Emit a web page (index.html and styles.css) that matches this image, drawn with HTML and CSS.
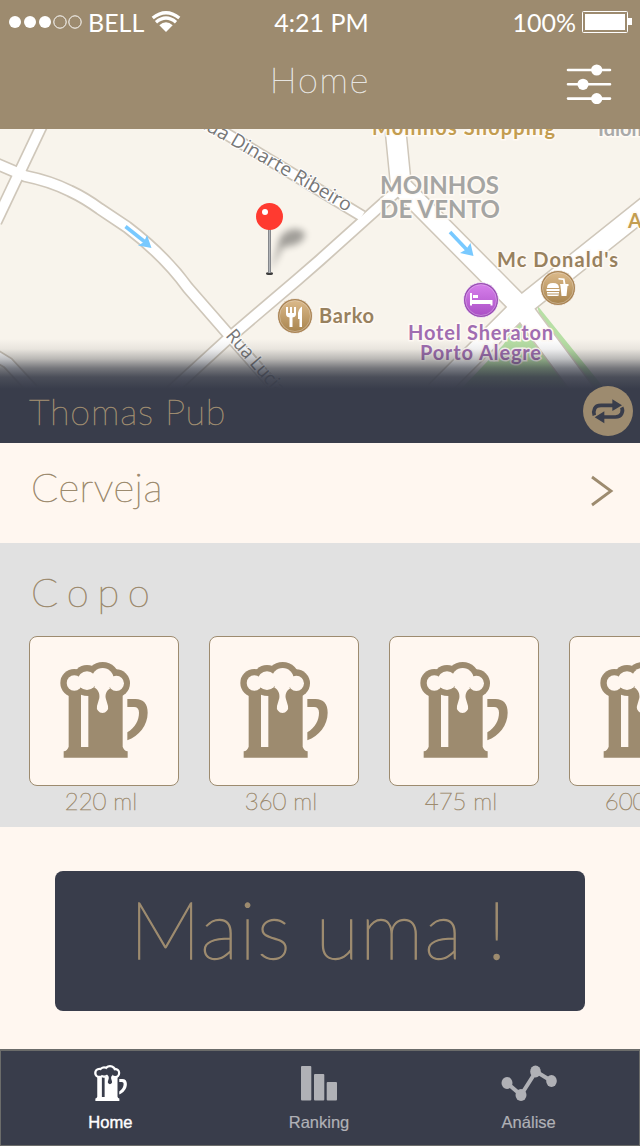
FILE: index.html
```html
<!DOCTYPE html>
<html lang="pt-BR">
<head>
<meta charset="utf-8">
<title>Home</title>
<link rel="stylesheet" href="styles.css">
</head>
<body>
<svg class="defs" aria-hidden="true">
  <symbol id="mug" viewBox="121 96 262 288">
    <g fill="currentColor">
      <circle cx="163" cy="159" r="42"/><circle cx="201" cy="148" r="43"/><circle cx="248" cy="147" r="51"/><circle cx="288" cy="160" r="42"/>
      <path d="M146 185H308V350Q312 362 323 364V383H131V364Q142 362 146 350Z"/>
      <path d="M322 207H346C371 207 383 222 383 248C383 286 357 318 322 331V307C346 292 357 270 357 248C357 237 352 231 342 231H322Z"/>
    </g>
    <g class="mug-foam">
      <circle cx="163" cy="159" r="23"/><circle cx="201" cy="152" r="28"/><circle cx="248" cy="147" r="33"/><circle cx="289" cy="160" r="23"/>
      <path d="M221 170C234 179 240 189 238 204L231 228A17 17 0 1 0 264 228L257 204C255 190 261 180 273 173Z"/>
      <path d="M183 194Q193 198 205 198V351H183Z"/>
    </g>
  </symbol>
</svg>
<div class="screen">
  <header class="header">
    <div class="status">
      <div class="status-left">
        <svg width="73" height="14" viewBox="0 0 73 14"><g fill="#fff"><circle cx="6" cy="7" r="6"/><circle cx="21" cy="7" r="6"/><circle cx="36" cy="7" r="6"/></g><g fill="none" stroke="#fff"><circle cx="51" cy="7" r="6.2"/><circle cx="66" cy="7" r="6.2"/></g></svg>
        <span class="carrier">BELL</span>
        <svg width="30" height="22" viewBox="0 0 30 22"><path fill="#fff" d="M15 21L8.3 14.2Q15 8.5 21.7 14.2Z"/><g fill="none" stroke="#fff" stroke-width="3.400"><path d="M5 11.2Q15 2.8 25 11.2"/><path d="M1.700 7Q15-3.400 28.300 7"/></g></svg>
      </div>
      <span class="clock">4:21 PM</span>
      <div class="status-right">
        <span class="percent">100%</span>
        <svg width="50" height="22" viewBox="0 0 50 22"><rect x=".5" y=".5" width="45" height="21" rx="1" fill="none" stroke="#fff"/><path fill="#fff" d="M3 3H43V19H3ZM46 7H50V14H46Z"/></svg>
      </div>
    </div>
    <div class="nav">
      <h1 class="nav-title">Home</h1>
      <svg class="sliders" width="46" height="40" viewBox="0 0 46 40"><path d="M2 6H44M2 20.300H44M2 34.600H44" stroke="#fff" stroke-width="2.600" stroke-linecap="round"/><g fill="#fff"><circle cx="30.700" cy="6" r="5.600"/><circle cx="17" cy="20.300" r="5.600"/><circle cx="30.700" cy="34.600" r="5.600"/></g></svg>
    </div>
  </header>

  <section class="map">
    <svg class="map-canvas" width="640" height="314" viewBox="0 129 640 314">
      <defs>
        <linearGradient id="tan" x2="0" y2="1"><stop stop-color="#dbb98a"/><stop offset="1" stop-color="#a9854f"/></linearGradient>
        <linearGradient id="violet" x2="0" y2="1"><stop stop-color="#d67feb"/><stop offset="1" stop-color="#ab50c6"/></linearGradient>
        <filter id="soft" x="-50%" y="-50%" width="200%" height="200%"><feGaussianBlur stdDeviation="3.500"/></filter>
        <g id="roads-narrow" fill="none">
          <path d="M42 125L-4 222"/>
          <path d="M-3 164L25 176Q50 181 70 191Q85 198 100 209L127 227Q165 256 188 288L229 335L280 393"/>
          <path d="M-5 355L8 363L33 390"/>
          <path d="M205 121L362 216"/>
          <path d="M170 392L230 337L297 280L320 260L398 190"/>
        </g>
        <g id="roads-wide" fill="none" stroke-linejoin="round">
          <path d="M396 120V135L401 186L521 307L585 393"/>
          <path d="M650 204L521 307L436 392"/>
        </g>
      </defs>
      <path fill="#b7dfa5" d="M521 320L503 345L462 388H568L540 350ZM537 305L541 322L594 388H604L562 336Z"/>
      <use href="#roads-narrow" stroke="#cfc7ba" stroke-width="13"/>
      <use href="#roads-wide" stroke="#cfc7ba" stroke-width="22.500"/>
      <use href="#roads-narrow" stroke="#fff" stroke-width="9.600"/>
      <use href="#roads-wide" stroke="#fff" stroke-width="19.500"/>
      <g fill="none" stroke="#78c9ff" stroke-width="3.600"><path d="M125.500 226.500L145 242"/><path d="M450 232L468 251"/></g>
      <g fill="#78c9ff"><path d="M147 235L151.500 248L138 245.500L144 242Z"/><path d="M470.500 243L473.500 256L460 253L466 249.500Z"/></g>
      <g class="street-label">
        <text transform="translate(195 124) rotate(30)" textLength="176" lengthAdjust="spacingAndGlyphs">Rua Dinarte Ribeiro</text>
        <text transform="translate(225 336) rotate(49)" textLength="80" lengthAdjust="spacingAndGlyphs">Rua Lucia</text>
      </g>
      <g class="place-label">
        <text class="gold" x="372" y="135" textLength="183">Moinhos Shopping</text>
        <text class="grey" x="598" y="136">Idiomas</text>
        <text class="gold" x="628" y="228">A</text>
        <text class="district" x="380" y="194" textLength="119">MOINHOS</text>
        <text class="district" x="380" y="218" textLength="120">DE VENTO</text>
        <text class="brown" x="497" y="267" textLength="121">Mc Donald's</text>
        <text class="brown" x="319" y="323" textLength="55">Barko</text>
      </g>
      <g stroke="#fff" stroke-opacity=".7" stroke-width="1">
        <circle cx="295" cy="316" r="17.500" fill="#aa8454"/><circle cx="295" cy="316" r="15.500" fill="url(#tan)" stroke-opacity=".3"/>
        <circle cx="558" cy="288" r="17.500" fill="#aa8454"/><circle cx="558" cy="288" r="15.500" fill="url(#tan)" stroke-opacity=".3"/>
        <circle cx="481" cy="300" r="17.500" fill="#9a4bb4"/><circle cx="481" cy="300" r="15.500" fill="url(#violet)" stroke-opacity=".3"/>
      </g>
      <g fill="#fff">
        <path d="M286 307H288V313H290V307H292V313H294V307H296V314Q296 317 292.500 317.500V327H289.500V317.500Q286 317 286 314ZM302 306.500V327H299.500V319H298V313Q299 308 302 306.500Z"/>
        <path d="M470 293H472V300H492.500V305.500H490.500V304H472V305.500H470ZM473 295H478V298H473Z"/>
        <path d="M547 288Q547 283 553 283Q559 283 559 288ZM546.500 289H559.500V291H546.500ZM547 292H559V293.500H547ZM547 294.500H559Q559 296 557 296H549Q547 296 547 294.500ZM560 284H563.500L563 280L558.500 279.500V278L564.500 278.500L565.500 284H568.500V286H567.500L566.500 296H561.500L560.500 286Z"/>
      </g>
      <g class="place-label">
        <text class="purple" x="408" y="340" textLength="145">Hotel Sheraton</text>
        <text class="purple" x="420" y="360" textLength="121">Porto Alegre</text>
      </g>
      <path d="M270 272L278 246Q279 232 293 229Q308 229 304 238Q299 246 283 247Z" fill="#000" opacity=".35" filter="url(#soft)"/>
      <ellipse cx="269.500" cy="273.500" rx="3.500" ry="1.500" fill="#3c3c3c"/>
      <path d="M269.500 229V273" stroke="#85878b" stroke-width="3"/><path d="M269.500 229V273" stroke="#b1b4b9" stroke-width="1"/>
      <circle cx="269.500" cy="216.500" r="13.500" fill="#ff3a30"/><circle cx="265" cy="212" r="3" fill="#fff"/>
    </svg>
    <div class="venue">
      <span class="venue-name">Thomas Pub</span>
      <svg class="swap" width="50" height="50" viewBox="789 318 150 150"><circle cx="864" cy="393" r="75" fill="#9d8b6f"/><g fill="none" stroke="#393d4b" stroke-width="11"><path d="M823 406Q819 396 824 386Q828 376 843 376H880"/><path d="M905 382Q910 391 905 401Q900 411 886 411H848"/></g><path fill="#393d4b" d="M877 358L906 376L877 393ZM853 394L824 412L853 430Z"/></svg>
    </div>
  </section>

  <section class="drink">
    <h2 class="drink-name">Cerveja</h2>
    <svg width="24" height="32" viewBox="0 0 24 32"><path d="M2 2L21 16L2 30" fill="none" stroke="#9d8b6f" stroke-width="2.800"/></svg>
  </section>

  <section class="sizes">
    <h2 class="sizes-title">Copo</h2>
    <div class="size-list">
      <div class="size"><div class="size-tile"><svg class="mug"><use href="#mug"/></svg></div><span class="size-label">220 ml</span></div>
      <div class="size"><div class="size-tile"><svg class="mug"><use href="#mug"/></svg></div><span class="size-label">360 ml</span></div>
      <div class="size"><div class="size-tile"><svg class="mug"><use href="#mug"/></svg></div><span class="size-label">475 ml</span></div>
      <div class="size"><div class="size-tile"><svg class="mug"><use href="#mug"/></svg></div><span class="size-label">600 ml</span></div>
    </div>
  </section>

  <section class="action"><button class="more">Mais uma !</button></section>

  <nav class="tabs">
    <div class="tab tab-active"><svg class="tab-mug"><use href="#mug"/></svg><span>Home</span></div>
    <div class="tab"><svg width="37" height="36" viewBox="0 0 37 36"><g fill="currentColor"><rect x="0" y="1" width="10.300" height="34.500" rx="1"/><rect x="13" y="9" width="10.300" height="26.500" rx="1"/><rect x="25.700" y="17" width="10.300" height="18.500" rx="1"/></g></svg><span>Ranking</span></div>
    <div class="tab"><svg width="56" height="36" viewBox="0 0 56 36"><path d="M6 18L20 30L35 6.500L50.500 16" fill="none" stroke="currentColor" stroke-width="4"/><g fill="currentColor"><ellipse cx="6" cy="18" rx="5.500" ry="6"/><ellipse cx="20" cy="30" rx="5.500" ry="6"/><ellipse cx="34.500" cy="6.500" rx="5.300" ry="6"/><ellipse cx="50.500" cy="16" rx="5.300" ry="6"/></g></svg><span>Análise</span></div>
  </nav>
</div>
</body>
</html>
```
FILE: styles.css
```css
* { box-sizing: border-box; }
body { margin: 0; font-family: Lato, "Open Sans", sans-serif; }
h1, h2 { margin: 0; }
svg { display: block; flex: none; }
.defs { position: absolute; width: 0; height: 0; }
.screen { width: 640px; height: 1146px; display: flex; flex-direction: column; overflow: hidden; background: #fff7f0; color: #9d8b6f; white-space: nowrap; }

.header { height: 129px; background: #9d8b6f; color: #fff; }
.status { height: 44px; display: grid; grid-template-columns: 1fr auto 1fr; align-items: center; padding: 0 8px 0 9px; font-size: 25px; line-height: 44px; }
.status-left { display: flex; align-items: center; gap: 6px; }
.carrier { width: 57px; }
.clock { padding-left: 2px; }
.status-right { display: flex; align-items: center; justify-content: flex-end; gap: 6px; }
.nav { height: 68px; display: grid; grid-template-columns: 1fr auto 1fr; align-items: center; padding: 0 28px; }
.nav-title { grid-column: 2; padding-top: 1px; font-size: 36px; font-weight: 100; letter-spacing: 1.8px; line-height: 68px; color: #f0f0f0; -webkit-text-stroke: .5px #e6e4e0; }
.sliders { justify-self: end; margin-top: 10px; }

.map { height: 314px; display: grid; background: #f8f4ec; overflow: hidden; }
.map-canvas, .venue { grid-area: 1 / 1; }
.venue { z-index: 1; align-self: end; height: 104px; display: flex; align-items: center; justify-content: space-between; padding: 40px 7px 1px 29px; background: linear-gradient(rgba(50,50,50,0) 0, rgba(50,52,58,.08) 10px, rgba(51,54,62,.32) 20px, rgba(54,58,69,.67) 29px, rgba(56,60,73,.9) 38px, #393d4b 50px); }
.venue-name { font-size: 36px; font-weight: 100; letter-spacing: .8px; -webkit-text-stroke: .6px #9d8b6f; }
.street-label { font: 400 19px "Open Sans", sans-serif; fill: #777; paint-order: stroke; stroke: #fff; stroke-width: 2px; }
.place-label { font-size: 20px; font-weight: 700; paint-order: stroke; stroke: #fffaf4; stroke-width: 3px; }
.gold { fill: #c39d50; }
.grey { fill: #aaa; }
.district { font-size: 24px; fill: #a5a5a3; }
.brown { fill: #98815e; }
.purple { fill: #a06db1; }

.drink { height: 100px; display: flex; align-items: center; justify-content: space-between; padding: 0 26px 5px 31px; }
.drink-name { font-size: 40px; font-weight: 100; letter-spacing: .5px; margin-top: -8px; -webkit-text-stroke: .7px #9d8b6f; }
.sizes { height: 284px; padding: 24px 0 0 29px; background: #e1e1e1; overflow: hidden; }
.sizes-title { height: 69px; padding-left: 2px; font-size: 40px; font-weight: 100; line-height: 51px; letter-spacing: 8.7px; -webkit-text-stroke: .7px #9d8b6f; }
.size-list { display: flex; gap: 30px; }
.size { flex: none; width: 150px; text-align: center; }
.size-tile { height: 150px; padding: 25px 0 0 30px; border: 1px solid #9d8b6f; border-radius: 8px; background: #fff7f0; }
.mug { width: 88px; height: 96px; }
.mug-foam { fill: var(--foam, #fff7f0); }
.size-label { display: block; padding-right: 6px; font-size: 24px; font-weight: 100; line-height: 30px; -webkit-text-stroke: .6px #9d8b6f; }

.action { flex: 1; display: flex; justify-content: center; padding-top: 44px; }
.more { width: 530px; height: 140px; border: 0; border-radius: 8px; padding: 0 3px 26px 0; background: #393d4b; color: #9d8b6f; font: 100 80px/114px Lato, sans-serif; letter-spacing: 1.1px; -webkit-text-stroke: 1.3px #9d8b6f; }

.tabs { height: 97px; display: flex; padding: 0 5px; border: 1px solid #6b6c6a; border-top-width: 2px; background: #393d4b; color: #b0b1b6; font: 16.5px "Liberation Sans", sans-serif; }
.tab { flex: 1; display: flex; flex-direction: column; align-items: center; gap: 12px; padding-top: 14px; }
.tab:not(.tab-active) { padding-right: 1px; }
.tab:not(.tab-active) span { -webkit-text-stroke: .2px #b0b1b6; }
.tab-active { color: #fff; -webkit-text-stroke: .4px #fff; }
.tab-mug { --foam: #393d4b; width: 33px; height: 36px; -webkit-text-stroke: 0; }
```
